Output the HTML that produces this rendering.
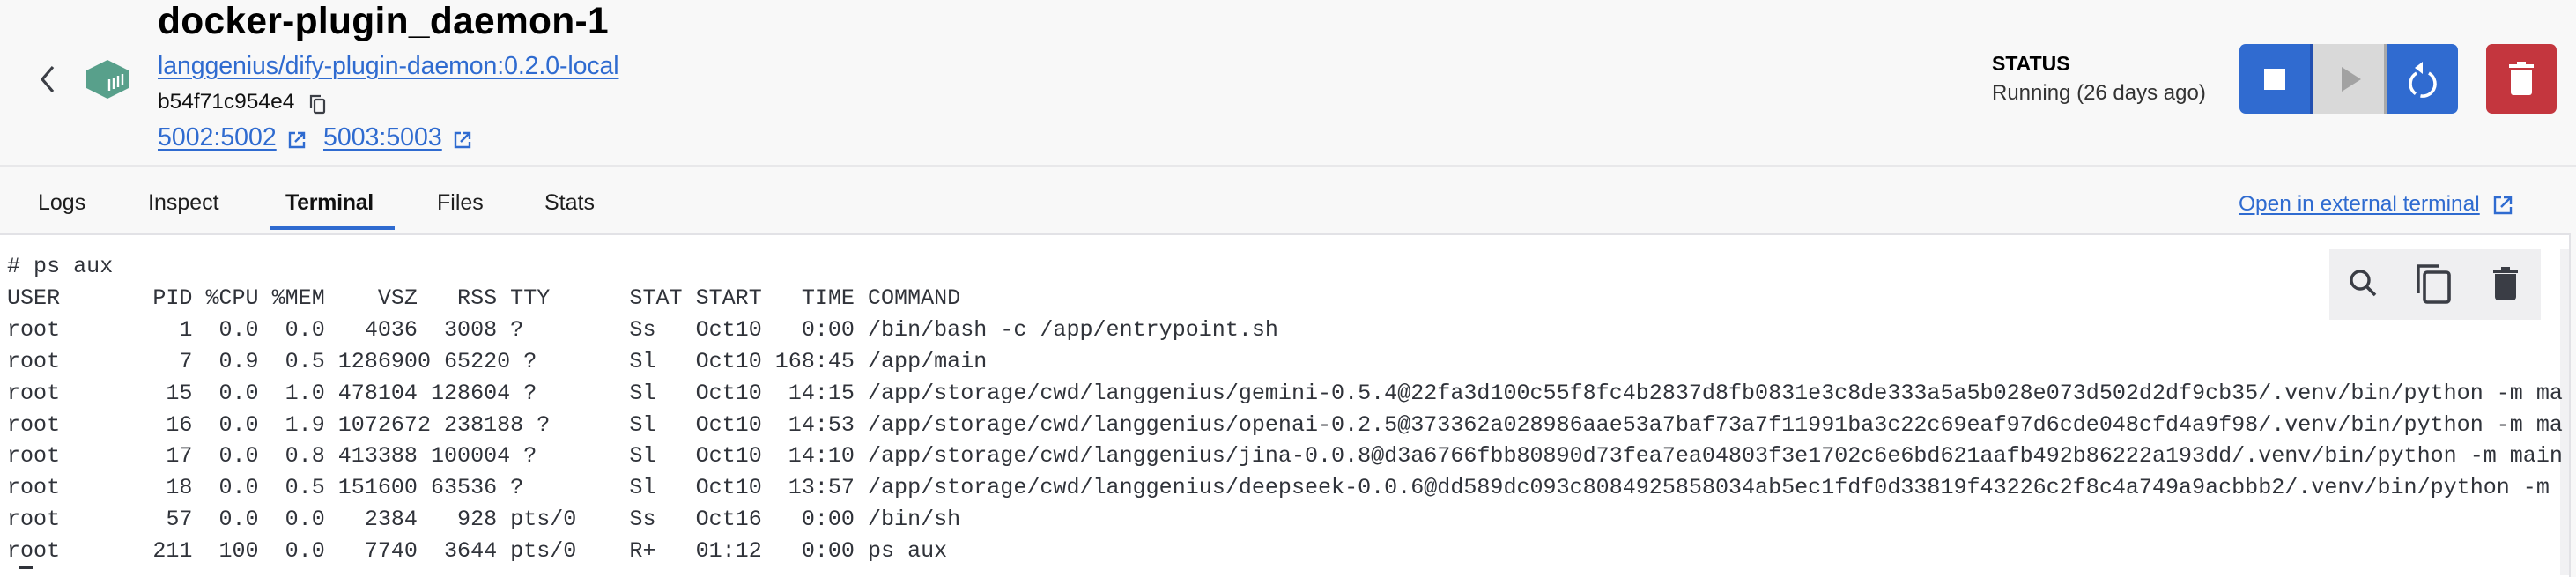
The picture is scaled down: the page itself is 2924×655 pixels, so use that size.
<!DOCTYPE html>
<html><head><meta charset="utf-8"><style>
*{margin:0;padding:0;box-sizing:border-box}
body{width:2924px;height:646px;overflow:hidden;background:#f8f8f8;font-family:"Liberation Sans",sans-serif;position:relative}
.a{position:absolute;white-space:nowrap}
.lnk{color:#2f6bd0;text-decoration:underline;text-decoration-thickness:2px;text-underline-offset:4px}
.tab{position:absolute;top:216px;font-size:25px;color:#1e1e1e}
pre{position:absolute;left:8px;top:285px;font-family:"Liberation Mono",monospace;font-size:25.05px;line-height:35.9px;color:#30333a}
</style></head><body>
<svg class="a" style="left:40px;top:72px" width="26" height="36" viewBox="0 0 26 36"><path d="M20 4 L8 18 L20 32" fill="none" stroke="#3c3f46" stroke-width="3.2"/></svg>
<svg class="a" style="left:96px;top:66px" width="52" height="48" viewBox="0 0 52 48"><polygon points="26,2 50,14 50,34 26,46 2,34 2,14" fill="#58a08b"/><g stroke="#fff" stroke-width="2.4"><line x1="28" y1="37" x2="28" y2="24"/><line x1="33" y1="35" x2="33" y2="22"/><line x1="38" y1="33" x2="38" y2="20"/><line x1="43" y1="31" x2="43" y2="18"/></g></svg>
<div class="a" style="left:179px;top:1px;font-size:42.5px;font-weight:bold;color:#000;letter-spacing:0.3px">docker-plugin_daemon-1</div>
<div class="a lnk" style="left:179px;top:59px;font-size:28.5px;letter-spacing:-0.1px">langgenius/dify-plugin-daemon:0.2.0-local</div>
<div class="a" style="left:179px;top:102px;font-size:24.5px;color:#111">b54f71c954e4</div>
<svg class="a" style="left:350px;top:106px" width="22" height="24" viewBox="0 0 22 24"><path d="M3 17 V3 H14" fill="none" stroke="#3c3f46" stroke-width="2.2"/><rect x="7" y="7" width="11" height="15" rx="1.5" fill="none" stroke="#3c3f46" stroke-width="2.2"/></svg>
<div class="a lnk" style="left:179px;top:140px;font-size:28.5px">5002:5002</div>
<svg class="a" style="left:326px;top:148px" width="22" height="22" viewBox="0 0 22 22"><path d="M9 3 H3 V19 H19 V13 M12 3 H19 V10 M19 3 L9 13" fill="none" stroke="#2f6bd0" stroke-width="2.4"/></svg>
<div class="a lnk" style="left:367px;top:140px;font-size:28.5px">5003:5003</div>
<svg class="a" style="left:514px;top:148px" width="22" height="22" viewBox="0 0 22 22"><path d="M9 3 H3 V19 H19 V13 M12 3 H19 V10 M19 3 L9 13" fill="none" stroke="#2f6bd0" stroke-width="2.4"/></svg>

<div class="a" style="left:2261px;top:59px;font-size:23px;font-weight:bold;color:#000">STATUS</div>
<div class="a" style="left:2261px;top:92px;font-size:24px;color:#333">Running (26 days ago)</div>
<div class="a" style="left:2542px;top:50px;width:248px;height:79px;border-radius:7px;overflow:hidden;background:#306bd0">
 <div class="a" style="left:80px;top:0;width:4px;height:79px;background:#2350b0"></div>
 <div class="a" style="left:84px;top:0;width:80px;height:79px;background:#d9d9d9"></div>
 <div class="a" style="left:164px;top:0;width:4px;height:79px;background:#a9a9a9"></div>
 <div class="a" style="left:28px;top:28px;width:24px;height:24px;background:#fff"></div>
 <svg class="a" style="left:114px;top:26px" width="24" height="28"><polygon points="2,0 24,14 2,28" fill="#a2a2a2"/></svg>
 <svg class="a" style="left:190px;top:14px" width="36" height="52" viewBox="0 0 36 52"><path d="M11 19 A14 14 0 1 0 25 19" fill="none" stroke="#fff" stroke-width="3.6" stroke-dasharray="28 6 60"/><polygon points="18,6 18,20 9,13" fill="#fff"/></svg>
</div>
<div class="a" style="left:2822px;top:50px;width:80px;height:79px;border-radius:7px;background:#c4363e">
 <div class="a" style="left:26px;top:23px;width:28px;height:4px;background:#fff"></div>
 <div class="a" style="left:35px;top:20px;width:10px;height:4px;background:#fff"></div>
 <div class="a" style="left:28px;top:29px;width:24px;height:29px;background:#fff;border-radius:0 0 3px 3px"></div>
</div>

<div class="a" style="left:0;top:187px;width:2924px;height:3px;background:#e8e8ea"></div>
<div class="tab" style="left:43px">Logs</div>
<div class="tab" style="left:168px">Inspect</div>
<div class="tab" style="left:324px;font-weight:bold;color:#111;letter-spacing:-0.3px">Terminal</div>
<div class="tab" style="left:496px">Files</div>
<div class="tab" style="left:618px">Stats</div>
<div class="a" style="left:307px;top:257px;width:141px;height:4px;background:#2f6bd0"></div>
<div class="a lnk" style="left:2541px;top:218px;font-size:24.5px;text-decoration-thickness:1.5px;text-underline-offset:3px">Open in external terminal</div>
<svg class="a" style="left:2830px;top:222px" width="22" height="22" viewBox="0 0 22 22"><path d="M9 2 H2 V20 H20 V13 M12 2 H20 V10 M20 2 L9 13" fill="none" stroke="#2f6bd0" stroke-width="2.4"/></svg>

<div class="a" style="left:0;top:265px;width:2918px;height:390px;background:#fff;border-top:2px solid #e2e2e6;border-right:2px solid #e2e2e6"></div>
<div class="a" style="left:2906px;top:283px;width:10px;height:370px;background:#f1f1f3"></div>
<div class="a" style="left:2644px;top:283px;width:240px;height:80px;background:#efeff1"></div>
<svg class="a" style="left:2664px;top:303px" width="40" height="40" viewBox="0 0 40 40"><circle cx="15" cy="15" r="10" fill="none" stroke="#3a3d45" stroke-width="3.4"/><line x1="22" y1="22" x2="32" y2="32" stroke="#3a3d45" stroke-width="3.6"/></svg>
<svg class="a" style="left:2742px;top:299px" width="42" height="48" viewBox="0 0 42 48"><path d="M3 34 V3 H27" fill="none" stroke="#3a3d45" stroke-width="3.4"/><rect x="10" y="10" width="28" height="34" rx="3" fill="none" stroke="#3a3d45" stroke-width="3.6"/></svg>
<div class="a" style="left:2830px;top:306px;width:28px;height:4px;background:#3a3d45"></div>
<div class="a" style="left:2839px;top:303px;width:10px;height:4px;background:#3a3d45"></div>
<div class="a" style="left:2832px;top:311px;width:24px;height:30px;background:#3a3d45;border-radius:0 0 4px 4px"></div>

<pre># ps aux
USER       PID %CPU %MEM    VSZ   RSS TTY      STAT START   TIME COMMAND
root         1  0.0  0.0   4036  3008 ?        Ss   Oct10   0:00 /bin/bash -c /app/entrypoint.sh
root         7  0.9  0.5 1286900 65220 ?       Sl   Oct10 168:45 /app/main
root        15  0.0  1.0 478104 128604 ?       Sl   Oct10  14:15 /app/storage/cwd/langgenius/gemini-0.5.4@22fa3d100c55f8fc4b2837d8fb0831e3c8de333a5a5b028e073d502d2df9cb35/.venv/bin/python -m ma
root        16  0.0  1.9 1072672 238188 ?      Sl   Oct10  14:53 /app/storage/cwd/langgenius/openai-0.2.5@373362a028986aae53a7baf73a7f11991ba3c22c69eaf97d6cde048cfd4a9f98/.venv/bin/python -m ma
root        17  0.0  0.8 413388 100004 ?       Sl   Oct10  14:10 /app/storage/cwd/langgenius/jina-0.0.8@d3a6766fbb80890d73fea7ea04803f3e1702c6e6bd621aafb492b86222a193dd/.venv/bin/python -m main
root        18  0.0  0.5 151600 63536 ?        Sl   Oct10  13:57 /app/storage/cwd/langgenius/deepseek-0.0.6@dd589dc093c8084925858034ab5ec1fdf0d33819f43226c2f8c4a749a9acbbb2/.venv/bin/python -m
root        57  0.0  0.0   2384   928 pts/0    Ss   Oct16   0:00 /bin/sh
root       211  100  0.0   7740  3644 pts/0    R+   01:12   0:00 ps aux</pre>
<div class="a" style="left:22px;top:642px;width:15px;height:4px;background:#30333a"></div>
</body></html>
